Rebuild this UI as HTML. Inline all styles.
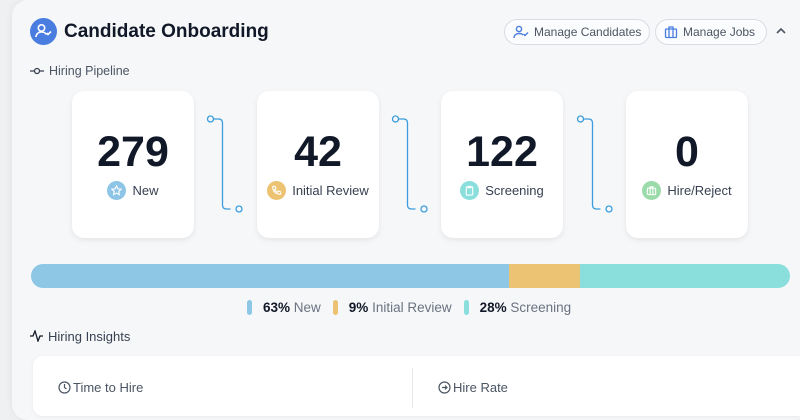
<!DOCTYPE html>
<html><head><style>
*{margin:0;padding:0;box-sizing:border-box}
body{width:800px;height:400px;overflow:hidden;background:#eef0f1;font-family:"Liberation Sans",sans-serif;position:relative}
.panel{position:absolute;left:12px;top:0;width:800px;height:420px;background:#f6f7f9;border-radius:16px;box-shadow:0 0 8px rgba(0,0,0,.06)}
.abs{position:absolute}
.card{position:absolute;top:91px;width:122px;height:147px;background:#fff;border-radius:12px;box-shadow:0 2px 6px rgba(0,0,0,.08)}
.num{position:absolute;top:37px;width:100%;text-align:center;font-size:43px;font-weight:bold;color:#111827}
.lbl{position:absolute;top:90px;width:100%;text-align:center;font-size:13px;color:#374151;display:flex;justify-content:center;align-items:center;gap:6px}
.ic{width:19px;height:19px;border-radius:50%;display:inline-flex;align-items:center;justify-content:center}
.btn{position:absolute;top:19px;height:26px;border:1px solid #d9dde3;border-radius:13px;background:#fbfcfd;font-size:12px;color:#4b5563;display:flex;align-items:center;padding-left:8px;gap:5px}
</style></head><body>
<div class="panel"></div>
<div class="abs" style="left:30px;top:18px;width:27px;height:27px;border-radius:50%;background:#4a7de0">
<svg width="27" height="27" viewBox="0 0 27 27" fill="none" stroke="#fff" stroke-width="1.6"><circle cx="11.5" cy="10" r="3.2"/><path d="M6 19c0-3 2.5-5 5.5-5s4 1 5 2.5"/><path d="M16.5 15l1.5 1.5 3-3"/></svg></div>
<div class="abs" style="left:64px;top:21px;font-size:19px;font-weight:bold;color:#111827">Candidate Onboarding</div>
<div class="btn" style="left:504px;width:146px"><svg width="16" height="14" viewBox="0 0 16 14" fill="none" stroke="#4a7de0" stroke-width="1.4"><circle cx="6" cy="4" r="2.6"/><path d="M1 13c0-3 2.5-4.5 5-4.5s3 .5 4 1.5"/><path d="M10.5 9l1.5 1.5 3-3"/></svg>Manage Candidates</div>
<div class="btn" style="left:655px;width:112px"><svg width="14" height="14" viewBox="0 0 14 14" fill="none" stroke="#4a7de0" stroke-width="1.3"><rect x="1.5" y="4" width="11" height="8.5" rx="1"/><path d="M5 4V2h4v2M5 4v8.5M9 4v8.5"/></svg>Manage Jobs</div>
<svg class="abs" style="left:775px;top:25px" width="12" height="12" viewBox="0 0 12 12" fill="none" stroke="#4b5563" stroke-width="1.6"><path d="M2 8l4-4 4 4"/></svg>
<svg class="abs" style="left:30px;top:66px" width="14" height="10" viewBox="0 0 14 10" fill="none" stroke="#374151" stroke-width="1.3"><path d="M0 5h4M10 5h4"/><circle cx="7" cy="5" r="2.5"/></svg>
<div class="abs" style="left:49px;top:64px;font-size:12.5px;color:#4b5563">Hiring Pipeline</div>

<div class="card" style="left:72px"><div class="num">279</div><div class="lbl"><span class="ic" style="background:#8ec5e6"><svg width="11" height="11" viewBox="0 0 12 12" fill="none" stroke="#fff" stroke-width="1.2"><path d="M6 1l1.5 3.2 3.5.4-2.6 2.4.7 3.5L6 8.8 2.9 10.5l.7-3.5L1 4.6l3.5-.4z"/></svg></span>New</div></div>
<div class="card" style="left:257px"><div class="num">42</div><div class="lbl"><span class="ic" style="background:#ebc372"><svg width="11" height="11" viewBox="0 0 12 12" fill="none" stroke="#fff" stroke-width="1.2"><path d="M2 1.5h2.5l1 2.5-1.5 1c.6 1.3 1.7 2.4 3 3l1-1.5 2.5 1v2.5c-5 .5-9-3.5-8.5-8.5z"/></svg></span>Initial Review</div></div>
<div class="card" style="left:441px"><div class="num">122</div><div class="lbl"><span class="ic" style="background:#8adfdd"><svg width="11" height="11" viewBox="0 0 12 12" fill="none" stroke="#fff" stroke-width="1.2"><rect x="2.5" y="2" width="7" height="9" rx="1"/><path d="M4.5 1.5h3v1.5h-3z"/></svg></span>Screening</div></div>
<div class="card" style="left:626px"><div class="num">0</div><div class="lbl"><span class="ic" style="background:#9bdbaa"><svg width="11" height="11" viewBox="0 0 12 12" fill="none" stroke="#fff" stroke-width="1.2"><rect x="1.5" y="3.5" width="9" height="7" rx="1"/><path d="M4.5 3.5V2h3v1.5M4.5 3.5v7M7.5 3.5v7"/></svg></span>Hire/Reject</div></div>

<svg class="abs" style="left:0;top:0" width="800" height="260" fill="none" stroke="#3b9ddd" stroke-width="1.3">
<g id="c"><circle cx="210.5" cy="119" r="3"/><path d="M213.5 119h5q4 0 4 4v82q0 4 4 4h4"/><circle cx="239" cy="209" r="3"/></g>
<use href="#c" x="185"/><use href="#c" x="370"/>
</svg>

<div class="abs" style="left:31px;top:264px;width:759px;height:24px;border-radius:12px;overflow:hidden;display:flex">
<div style="width:478px;background:#8ec6e6"></div><div style="width:71px;background:#ebc372"></div><div style="flex:1;background:#8adfdd"></div></div>

<div class="abs" style="left:247px;top:300px;font-size:13.5px;color:#6b7280;display:flex;align-items:center;white-space:nowrap">
<span style="width:5px;height:15px;border-radius:3px;background:#8ec6e6;margin-right:11px"></span><b style="color:#111827">63%</b>&nbsp;New
<span style="width:5px;height:15px;border-radius:3px;background:#ebc372;margin:0 11px 0 12px"></span><b style="color:#111827">9%</b>&nbsp;Initial Review
<span style="width:5px;height:15px;border-radius:3px;background:#8adfdd;margin:0 11px 0 12px"></span><b style="color:#111827">28%</b>&nbsp;Screening</div>

<svg class="abs" style="left:30px;top:330px" width="13" height="12" viewBox="0 0 13 12" fill="none" stroke="#111827" stroke-width="1.3"><path d="M0 6h3l2-5 3 10 2-5h3"/></svg>
<div class="abs" style="left:48px;top:329px;font-size:13px;color:#374151">Hiring Insights</div>

<div class="abs" style="left:33px;top:356px;width:780px;height:60px;background:#fff;border-radius:10px;box-shadow:0 1px 5px rgba(0,0,0,.06)"></div>
<div class="abs" style="left:412px;top:368px;width:1px;height:40px;background:#e5e7eb"></div>
<svg class="abs" style="left:58px;top:381px" width="13" height="13" viewBox="0 0 13 13" fill="none" stroke="#4b5563" stroke-width="1.2"><circle cx="6.5" cy="6.5" r="5.5"/><path d="M6.5 3v3.5l2 1.5"/></svg>
<div class="abs" style="left:73px;top:380px;font-size:13px;color:#4b5563">Time to Hire</div>
<svg class="abs" style="left:438px;top:381px" width="13" height="13" viewBox="0 0 13 13" fill="none" stroke="#4b5563" stroke-width="1.2"><circle cx="6.5" cy="6.5" r="5.5"/><path d="M4 6.5h5M7 4.5l2 2-2 2"/></svg>
<div class="abs" style="left:453px;top:380px;font-size:13px;color:#4b5563">Hire Rate</div>
</body></html>
